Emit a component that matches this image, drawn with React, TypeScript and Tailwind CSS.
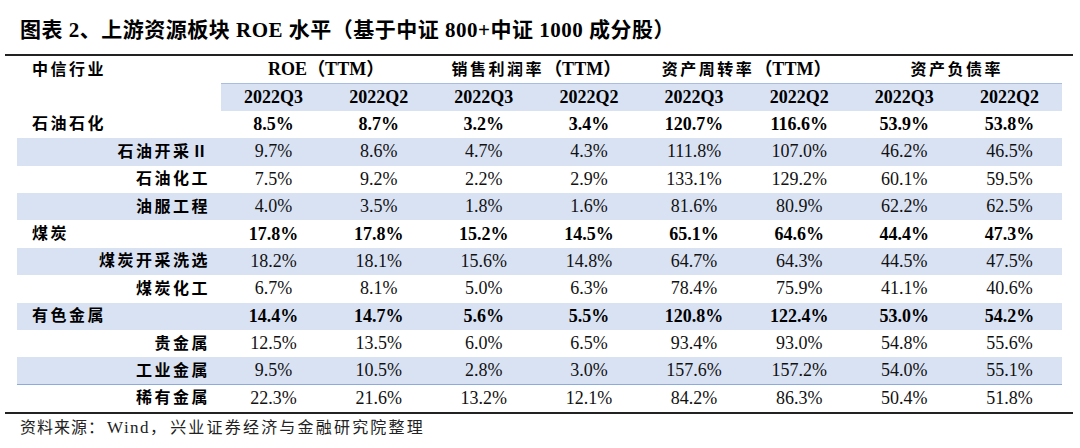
import * as React from "react";

type Row = { name: string; group?: boolean; v: string[] };

const rows: Row[] = [
  { name: "石油石化", group: true, v: ["8.5%", "8.7%", "3.2%", "3.4%", "120.7%", "116.6%", "53.9%", "53.8%"] },
  { name: "石油开采Ⅱ", v: ["9.7%", "8.6%", "4.7%", "4.3%", "111.8%", "107.0%", "46.2%", "46.5%"] },
  { name: "石油化工", v: ["7.5%", "9.2%", "2.2%", "2.9%", "133.1%", "129.2%", "60.1%", "59.5%"] },
  { name: "油服工程", v: ["4.0%", "3.5%", "1.8%", "1.6%", "81.6%", "80.9%", "62.2%", "62.5%"] },
  { name: "煤炭", group: true, v: ["17.8%", "17.8%", "15.2%", "14.5%", "65.1%", "64.6%", "44.4%", "47.3%"] },
  { name: "煤炭开采洗选", v: ["18.2%", "18.1%", "15.6%", "14.8%", "64.7%", "64.3%", "44.5%", "47.5%"] },
  { name: "煤炭化工", v: ["6.7%", "8.1%", "5.0%", "6.3%", "78.4%", "75.9%", "41.1%", "40.6%"] },
  { name: "有色金属", group: true, v: ["14.4%", "14.7%", "5.6%", "5.5%", "120.8%", "122.4%", "53.0%", "54.2%"] },
  { name: "贵金属", v: ["12.5%", "13.5%", "6.0%", "6.5%", "93.4%", "93.0%", "54.8%", "55.6%"] },
  { name: "工业金属", v: ["9.5%", "10.5%", "2.8%", "3.0%", "157.6%", "157.2%", "54.0%", "55.1%"] },
  { name: "稀有金属", v: ["22.3%", "21.6%", "13.2%", "12.1%", "84.2%", "86.3%", "50.4%", "51.8%"] },
];

const quarters = ["2022Q3", "2022Q2", "2022Q3", "2022Q2", "2022Q3", "2022Q2", "2022Q3", "2022Q2"];

const grid = "grid grid-cols-[204px_repeat(8,1fr)] w-[1045px] h-[27.4px] items-center";

function Heading({ zh, ttm }: { zh: string; ttm?: boolean }) {
  return (
    <div className="col-span-2 text-center font-bold whitespace-nowrap">
      {zh === "ROE" ? (
        <span className="text-[18px]">ROE</span>
      ) : (
        <span className="text-[16px] tracking-[2.5px]">{zh}</span>
      )}
      {ttm && <span className="text-[18px]">（TTM）</span>}
    </div>
  );
}

export default function App() {
  return (
    <div className="w-[1080px] h-[448px] bg-white text-black font-['Liberation_Serif','Noto_Sans_CJK_SC',serif] overflow-hidden">
      <div className="h-[54px] pl-[20px] pt-[19px]">
        <div className="text-[21px] leading-[22px] font-bold tracking-[0.5px] whitespace-nowrap">
          图表 2、上游资源板块 ROE 水平（基于中证 800+中证 1000 成分股）
        </div>
      </div>

      <div className="ml-[5px] w-[1068px] border-t-2 border-b-2 border-[#222]">
        <div className={`${grid} ml-[12px]`}>
          <div className="pl-[15px] text-[16px] font-bold tracking-[2.5px]">中信行业</div>
          <Heading zh="ROE" ttm />
          <Heading zh="销售利润率" ttm />
          <Heading zh="资产周转率" ttm />
          <Heading zh="资产负债率" />
        </div>

        <div className={`${grid} ml-[12px]`}>
          <div />
          <div className="col-span-8 grid grid-cols-8 h-full items-center bg-[#d9e2f3] border-t border-[#a9bde3]">
            {quarters.map((q, i) => (
              <div key={i} className="text-center text-[18px] font-bold">
                {q}
              </div>
            ))}
          </div>
        </div>

        {rows.map((r, i) => (
          <div
            key={r.name}
            className={`${grid} ml-[12px] ${i % 2 === 1 ? "bg-[#d9e2f3]" : ""} ${
              i === 9 ? "border-b border-[#8eaadb]" : ""
            }`}
          >
            <div
              className={`text-[16px] font-bold tracking-[2.5px] whitespace-nowrap ${
                r.group ? "pl-[15px]" : "text-right pr-[11px]"
              }`}
            >
              {r.name}
            </div>
            {r.v.map((v, j) => (
              <div
                key={j}
                className={`text-center text-[18px] ${r.group ? "font-bold" : "text-[#111]"}`}
              >
                {v}
              </div>
            ))}
          </div>
        ))}
      </div>

      <div className="mt-[4px] pl-[20px] text-[16px] leading-[20px] text-[#222] whitespace-nowrap flex items-center">
        <span className="tracking-[1px]">资料来源：</span>
        <span className="ml-[2px] text-[17px] tracking-[1.5px]">Wind</span>
        <span className="mr-[4px]">，</span>
        <span className="tracking-[2.2px]">兴业证券经济与金融研究院整理</span>
      </div>
    </div>
  );
}
